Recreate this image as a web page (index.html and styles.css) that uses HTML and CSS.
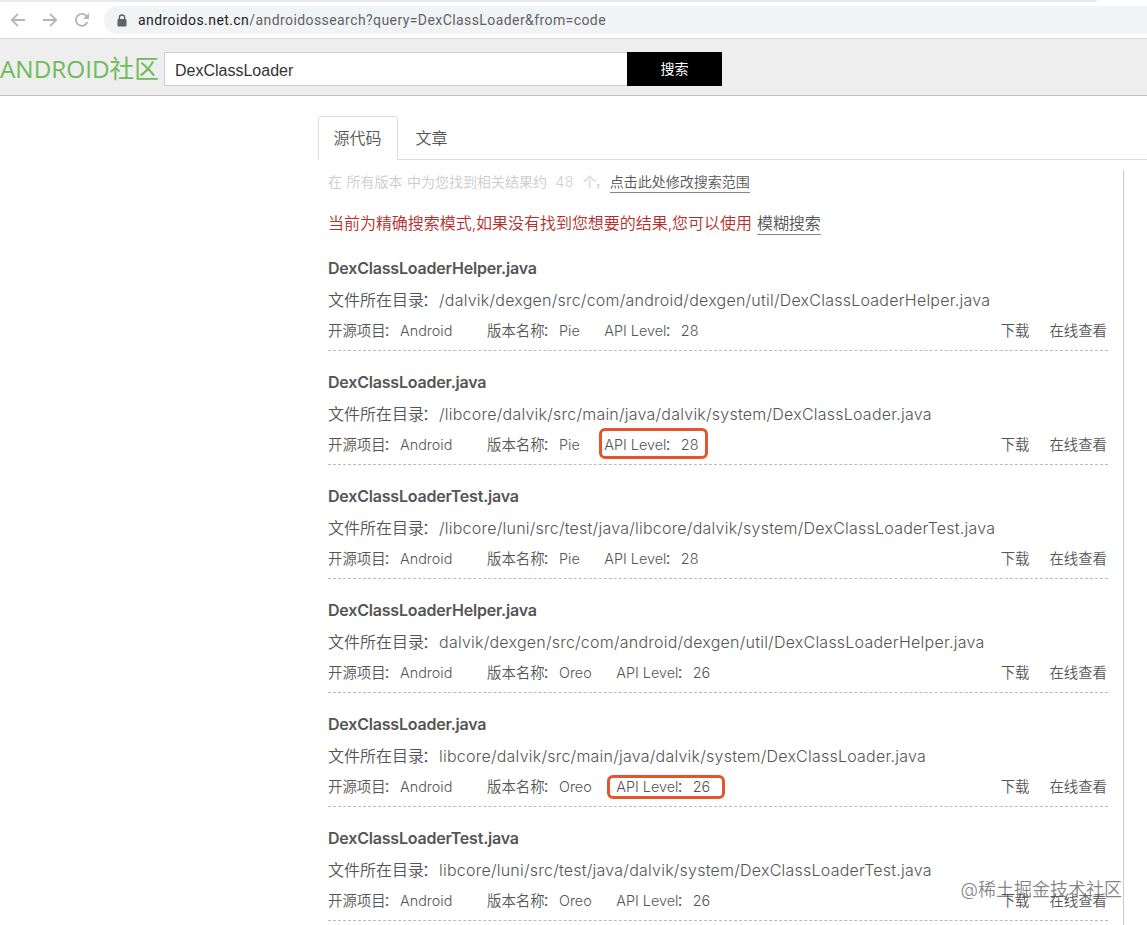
FILE: index.html
```html
<!DOCTYPE html>
<html lang="zh-CN">
<head>
	<meta charset="utf-8">
	<meta name="viewport" content="width=device-width, initial-scale=1.0">
	<title>ANDROID社区</title>
	<link rel="stylesheet" href="styles.css">
</head>
<body>
	<div class="tab-strip"></div>
	<div class="browser-bar">
		<svg class="nav-icon" viewBox="0 0 16 16"><path d="M15 8H2M8 1.8L1.8 8L8 14.2"/></svg>
		<svg class="nav-icon" viewBox="0 0 16 16"><path d="M1 8h13M8 1.8L14.2 8L8 14.2"/></svg>
		<svg class="nav-icon" viewBox="0 0 16 16"><path d="M13.4 10.2A6 6 0 1 1 12.6 4.1L14 5.6"/><path class="fill" d="M15 1v6H9z"/></svg>
		<div class="address">
			<svg class="lock" viewBox="0 0 10 13"><path d="M2.4 6V3.6a2.6 2.6 0 0 1 5.2 0V6" fill="none" stroke="#5f6368" stroke-width="1.4"/><rect x="0.5" y="5" width="9" height="7.4" rx="1" fill="#5f6368"/></svg>
			<span class="url"><b>androidos.net.cn</b>/androidossearch?query=DexClassLoader&amp;from=code</span>
		</div>
	</div>

	<div class="header">
		<a class="logo"><span>ANDROID</span>社区</a>
		<input class="search-input" type="text" value="DexClassLoader">
		<button class="search-btn">搜索</button>
	</div>

	<div class="content">
		<div class="tabs">
			<a class="tab active">源代码</a>
			<a class="tab">文章</a>
		</div>
		<div class="main">
			<div class="results">
				<p class="summary"><span>在</span><span>所有版本</span><span>中为您找到相关结果约</span><span class="count">48</span><span class="unit">个<i class="colon">，</i></span><a>点击此处修改搜索范围</a></p>
				<p class="notice">当前为精确搜索模式,如果没有找到您想要的结果,您可以使用 <a>模糊搜索</a></p>

				<div class="item">
					<h3>DexClassLoaderHelper.java</h3>
					<p class="path">文件所在目录<i class="colon">：</i><span>/dalvik/dexgen/src/com/android/dexgen/util/DexClassLoaderHelper.java</span></p>
					<div class="meta">
						<span class="project">开源项目<i class="colon">：</i>Android</span><span class="version">版本名称<i class="colon">：</i>Pie</span><span class="api">API Level<i class="colon">：</i>28</span>
						<span class="links"><a>下载</a><a>在线查看</a></span>
					</div>
				</div>
				<div class="item">
					<h3>DexClassLoader.java</h3>
					<p class="path">文件所在目录<i class="colon">：</i><span>/libcore/dalvik/src/main/java/dalvik/system/DexClassLoader.java</span></p>
					<div class="meta">
						<span class="project">开源项目<i class="colon">：</i>Android</span><span class="version">版本名称<i class="colon">：</i>Pie</span><span class="api">API Level<i class="colon">：</i>28<i class="mark"></i></span>
						<span class="links"><a>下载</a><a>在线查看</a></span>
					</div>
				</div>
				<div class="item">
					<h3>DexClassLoaderTest.java</h3>
					<p class="path">文件所在目录<i class="colon">：</i><span>/libcore/luni/src/test/java/libcore/dalvik/system/DexClassLoaderTest.java</span></p>
					<div class="meta">
						<span class="project">开源项目<i class="colon">：</i>Android</span><span class="version">版本名称<i class="colon">：</i>Pie</span><span class="api">API Level<i class="colon">：</i>28</span>
						<span class="links"><a>下载</a><a>在线查看</a></span>
					</div>
				</div>
				<div class="item">
					<h3>DexClassLoaderHelper.java</h3>
					<p class="path">文件所在目录<i class="colon">：</i><span>dalvik/dexgen/src/com/android/dexgen/util/DexClassLoaderHelper.java</span></p>
					<div class="meta">
						<span class="project">开源项目<i class="colon">：</i>Android</span><span class="version">版本名称<i class="colon">：</i>Oreo</span><span class="api">API Level<i class="colon">：</i>26</span>
						<span class="links"><a>下载</a><a>在线查看</a></span>
					</div>
				</div>
				<div class="item">
					<h3>DexClassLoader.java</h3>
					<p class="path">文件所在目录<i class="colon">：</i><span>libcore/dalvik/src/main/java/dalvik/system/DexClassLoader.java</span></p>
					<div class="meta">
						<span class="project">开源项目<i class="colon">：</i>Android</span><span class="version">版本名称<i class="colon">：</i>Oreo</span><span class="api">API Level<i class="colon">：</i>26<i class="mark mark-wide"></i></span>
						<span class="links"><a>下载</a><a>在线查看</a></span>
					</div>
				</div>
				<div class="item">
					<h3>DexClassLoaderTest.java</h3>
					<p class="path">文件所在目录<i class="colon">：</i><span>libcore/luni/src/test/java/dalvik/system/DexClassLoaderTest.java</span></p>
					<div class="meta">
						<span class="project">开源项目<i class="colon">：</i>Android</span><span class="version">版本名称<i class="colon">：</i>Oreo</span><span class="api">API Level<i class="colon">：</i>26</span>
						<span class="links"><a>下载</a><a>在线查看</a></span>
					</div>
				</div>
			</div>
		</div>
	</div>
	<div class="watermark">@稀土掘金技术社区</div>
</body>
</html>
```
FILE: styles.css
```css
* {
	box-sizing: border-box;
}

body {
	margin: 0;
	height: 925px;
	overflow: hidden;
	position: relative;
	background: #fff;
	color: #555;
	font-family: Inter, "Noto Sans CJK SC", sans-serif;
	font-weight: 350;
}

p, h3 {
	margin: 0;
}

/* browser toolbar */
.tab-strip {
	width: 1097px;
	height: 2px;
	background: #e8eae9;
	border-radius: 0 0 2px 0;
}

.browser-bar {
	height: 37px;
	display: flex;
	align-items: center;
	padding-left: 10px;
	border-bottom: 1px solid #d9d9d9;
}

.nav-icon {
	width: 16px;
	height: 16px;
	margin-right: 16px;
	fill: none;
	stroke: #b5b5b5;
	stroke-width: 1.8;
}

.nav-icon .fill {
	fill: #b5b5b5;
	stroke: none;
}

.address {
	flex: 1;
	height: 28px;
	margin-left: -2px;
	padding-left: 13px;
	display: flex;
	align-items: center;
	background: #f1f3f4;
	border-radius: 14px 0 0 14px;
}

.lock {
	width: 10px;
	height: 13px;
	margin-right: 11px;
}

.url {
	font-family: Roboto, sans-serif;
	font-size: 14px;
	font-weight: 400;
	letter-spacing: 0.42px;
	color: #5f6368;
}

.url b {
	font-weight: 400;
	color: #202124;
}

/* site header */
.header {
	height: 57px;
	display: flex;
	align-items: center;
	padding-top: 3px;
	background: #eee;
	border-bottom: 1px solid #bfbfbf;
}

.logo {
	width: 164px;
	padding-bottom: 2px;
	font-size: 24.6px;
	line-height: 32px;
	white-space: nowrap;
	color: #6fbb5b;
	font-family: "Noto Sans CJK SC", sans-serif;
	font-weight: 400;
}

.logo span {
	font-family: "Open Sans", sans-serif;
	font-size: 24.3px;
}

.search-input {
	width: 463px;
	height: 34px;
	padding: 4px 10px 0;
	border: 1px solid #ccc;
	border-right: 0;
	background: #fff;
	color: #333;
	font: 400 16px "Liberation Sans", sans-serif;
}

.search-btn {
	width: 95px;
	height: 34px;
	padding: 0 0 2px;
	border: 0;
	background: #000;
	color: #fff;
	font: 400 14px "Noto Sans CJK SC", sans-serif;
}

/* tabs */
.content {
	margin-left: 318px;
	padding-top: 20px;
}

.tabs {
	height: 44px;
	display: flex;
	border-bottom: 1px solid #ddd;
}

.tab {
	height: 44px;
	padding: 0 17.5px;
	font-size: 16px;
	line-height: 44px;
}

.tab.active {
	width: 80px;
	padding: 0 14.5px;
	line-height: 42px;
	border: 1px solid #ddd;
	border-bottom: 0;
	border-radius: 4px 4px 0 0;
	background: #fff;
}

.main {
	width: 806px;
	height: 760px;
	margin-top: 10px;
	padding: 0 15px 0 10px;
	border-right: 1px solid #ccc;
}

.summary {
	height: 24px;
	display: flex;
	font-size: 14px;
	line-height: 24px;
	color: #ccc;
}

.summary span {
	margin-right: 4.5px;
}

.summary .count {
	margin: 0 9px 0 4px;
	letter-spacing: 0.4px;
}

.summary .unit {
	width: 27px;
	margin-right: 0;
}

.summary a,
.notice a {
	height: 23px;
	color: #555;
	border-bottom: 1px solid #888;
}

.notice {
	height: 24px;
	margin-top: 17px;
	display: flex;
	font-size: 16px;
	line-height: 24px;
	letter-spacing: -0.04px;
	color: #b52d2a;
}

.notice a {
	height: 24px;
	margin-left: 5px;
}

/* result list */
.item {
	height: 114px;
	padding-top: 19px;
	border-bottom: 1px dashed #bbb;
}

.notice + .item {
	margin-top: 2px;
}

.item h3 {
	font-size: 16px;
	line-height: 24px;
	font-weight: 600;
	letter-spacing: -0.2px;
}

.colon {
	margin: 0 2px 0 -2px;
	font-style: normal;
}

.path {
	margin-top: 8px;
	font-size: 16px;
	line-height: 24px;
	white-space: nowrap;
}

.path span {
	margin-left: -1px;
	letter-spacing: 0.23px;
}

.meta {
	margin-top: 7px;
	display: flex;
	font-size: 14.4px;
	line-height: 24px;
}

.project {
	width: 159px;
}

.version {
	margin-right: 24.5px;
}

.api {
	position: relative;
}

.links {
	margin-left: auto;
	margin-right: 1px;
	display: flex;
	gap: 20px;
}

/* highlight box round the API level */
.mark {
	position: absolute;
	left: -5.5px;
	top: -5px;
	width: 109px;
	height: 31px;
	border: 3px solid #e2552d;
	border-radius: 6px;
}

.mark-wide {
	left: -9.5px;
	top: 0;
	width: 118px;
	height: 24px;
}

.watermark {
	position: absolute;
	right: 25px;
	top: 877px;
	font-size: 18px;
	line-height: 26px;
	color: rgba(90, 90, 90, 0.75);
}
```
